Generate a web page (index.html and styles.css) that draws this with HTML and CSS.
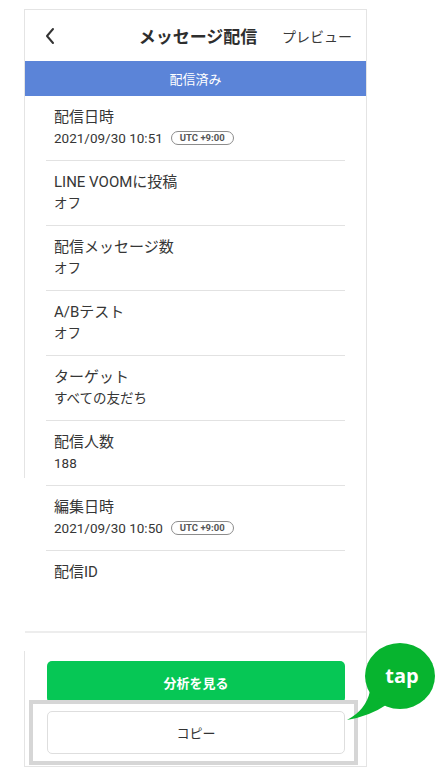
FILE: index.html
```html
<!DOCTYPE html>
<html lang="ja">
<head>
<meta charset="utf-8">
<link rel="stylesheet" href="styles.css">
</head>
<body>
<div class="page">
  <div class="frame">
    <header class="header">
      <div class="back">
        <svg width="12" height="18" viewBox="0 0 12 18"><polyline points="9,2 3,9 9,16" fill="none" stroke="#333" stroke-width="2" stroke-linecap="round" stroke-linejoin="round"/></svg>
      </div>
      <h1 class="title">メッセージ配信</h1>
      <div class="preview">プレビュー</div>
    </header>
    <div class="status">配信済み</div>
    <div class="rows">
      <div class="row">
        <div class="label">配信日時</div>
        <div class="value">2021/09/30 10:51<span class="badge">UTC +9:00</span></div>
      </div>
      <div class="row">
        <div class="label">LINE VOOMに投稿</div>
        <div class="value">オフ</div>
      </div>
      <div class="row">
        <div class="label">配信メッセージ数</div>
        <div class="value">オフ</div>
      </div>
      <div class="row">
        <div class="label">A/Bテスト</div>
        <div class="value">オフ</div>
      </div>
      <div class="row">
        <div class="label">ターゲット</div>
        <div class="value">すべての友だち</div>
      </div>
      <div class="row">
        <div class="label">配信人数</div>
        <div class="value">188</div>
      </div>
      <div class="row">
        <div class="label">編集日時</div>
        <div class="value">2021/09/30 10:50<span class="badge">UTC +9:00</span></div>
      </div>
      <div class="row row-last">
        <div class="label">配信ID</div>
      </div>
    </div>
    <div class="actions">
      <button class="btn btn-green">分析を見る</button>
      <button class="btn btn-white">コピー</button>
    </div>
  </div>
  <div class="highlight"></div>
  <svg class="bubble" width="100" height="90" viewBox="0 0 100 90">
    <ellipse cx="60" cy="36" rx="35" ry="33" fill="#07b42f"/>
    <path d="M30 51 Q26 70 7 80 Q30 76 46 65 Z" fill="#07b42f"/>
    <text x="62" y="43" text-anchor="middle" class="tap">tap</text>
  </svg>
</div>
</body>
</html>
```
FILE: styles.css
```css
* { box-sizing: border-box; }
html, body { margin: 0; padding: 0; background: #fff; }
body {
  font-family: Roboto, "Noto Sans CJK JP", sans-serif;
  color: #333;
}
.page {
  position: relative;
  width: 440px;
  height: 780px;
  padding: 9px 0 0 24px;
}
.frame {
  position: relative;
  width: 343px;
  border: 1px solid #e4e4e4;
  background: #fff;
}
.frame::after {
  content: "";
  position: absolute;
  left: -1px;
  top: 468px;
  width: 1px;
  height: 173px;
  background: #fff;
}
.header {
  height: 51px;
  display: grid;
  grid-template-columns: 1fr auto 1fr;
  align-items: center;
  padding: 0 14px 0 19px;
}
.back { display: flex; align-items: center; }
.title {
  margin: 0;
  font-size: 17px;
  font-weight: 700;
  color: #2e2e2e;
}
.preview {
  justify-self: end;
  font-size: 14px;
  color: #3a3a3a;
}
.status {
  height: 35px;
  background: #5b84d8;
  color: #fff;
  font-size: 13px;
  display: flex;
  align-items: center;
  justify-content: center;
}
.rows {
  margin: 0 21px 0 21px;
}
.row {
  height: 65px;
  border-bottom: 1px solid #e2e2e2;
  padding: 10px 0 0 8px;
}
.row-last {
  border-bottom: none;
  height: 80px;
}
.label {
  font-size: 15px;
  line-height: 22px;
  color: #363636;
}
.value {
  font-size: 13.5px;
  line-height: 20px;
  color: #363636;
  display: flex;
  align-items: center;
}
.badge {
  display: inline-block;
  margin-left: 8px;
  height: 14px;
  line-height: 12px;
  padding: 0 8px;
  border: 1px solid #8c8c8c;
  border-radius: 7px;
  font-size: 9.5px;
  font-weight: 700;
  color: #555;
}
.actions {
  border-top: 2px solid #ededed;
  padding: 28px 21px 12px 22px;
  display: flex;
  flex-direction: column;
  gap: 8px;
}
.btn {
  display: block;
  width: 100%;
  font-family: Roboto, "Noto Sans CJK JP", sans-serif;
  font-size: 13px;
  border-radius: 5px;
  cursor: pointer;
}
.btn-green {
  height: 42px;
  background: #06c755;
  color: #fff;
  font-weight: 700;
  border: none;
}
.btn-white {
  height: 43px;
  background: #fff;
  color: #333;
  border: 1px solid #dedede;
}
.highlight {
  position: absolute;
  left: 29px;
  top: 700px;
  width: 329px;
  height: 65px;
  border: 4px solid #d6d6d6;
}
.bubble {
  position: absolute;
  left: 340px;
  top: 640px;
}
.tap {
  fill: #fff;
  font-family: "Open Sans", Lato, sans-serif;
  font-weight: 700;
  font-size: 20px;
}
```
